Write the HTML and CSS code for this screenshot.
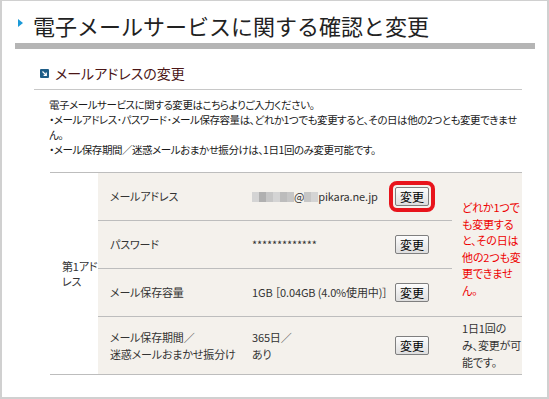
FILE: index.html
```html
<!DOCTYPE html>
<html lang="ja">
<head>
<meta charset="utf-8">
<title>電子メールサービスに関する確認と変更</title>
<link rel="stylesheet" href="styles.css">
</head>
<body>
<div class="frame">
  <div class="page-title">
    <span class="tri"></span>
    <h1>電子メールサービスに関する確認と変更</h1>
  </div>
  <div class="title-bar"></div>
  <section class="section">
    <h2 class="sec-head">
      <svg class="sec-icon" width="9" height="9" viewBox="0 0 9 9"><rect width="9" height="9" rx="1" fill="#1f5e88"/><path d="M2.5 2.5 L6.2 6.2 M6.3 3.6 V6.3 H3.6" stroke="#fff" stroke-width="1.2" fill="none"/></svg>
      <span>メールアドレスの変更</span>
    </h2>
    <div class="intro">
      <p>電子メールサービスに関する変更はこちらよりご入力ください。</p>
      <p>・メールアドレス･パスワード･メール保存容量は、どれか1つでも変更すると、その日は他の2つとも変更できません。</p>
      <p>・メール保存期間／迷惑メールおまかせ振分けは、1日1回のみ変更可能です。</p>
    </div>
    <table class="tbl">
      <tr class="r1">
        <td class="addr" rowspan="4">第1アド<br>レス</td>
        <td class="label">メールアドレス</td>
        <td class="value"><span class="blur"><i class="b1"></i><i class="b2"></i><i class="b3"></i><i class="b1"></i><i class="b4"></i><i class="b3"></i></span>@<span class="blur"><i class="b3"></i><i class="b1"></i></span>pikara.ne.jp</td>
        <td class="btn"><button class="chg hl">変更</button></td>
        <td class="note red" rowspan="3">どれか1つで<br>も変更する<br>と、その日は<br>他の2つも変<br>更できませ<br>ん。</td>
      </tr>
      <tr class="r2">
        <td class="label">パスワード</td>
        <td class="value">*************</td>
        <td class="btn"><button class="chg">変更</button></td>
      </tr>
      <tr class="r3">
        <td class="label">メール保存容量</td>
        <td class="value">1GB ［0.04GB (4.0%使用中)］</td>
        <td class="btn"><button class="chg">変更</button></td>
      </tr>
      <tr class="r4">
        <td class="label">メール保存期間／<br>迷惑メールおまかせ振分け</td>
        <td class="value">365日／<br>あり</td>
        <td class="btn"><button class="chg">変更</button></td>
        <td class="note">1日1回の<br>み、変更が可<br>能です。</td>
      </tr>
    </table>
  </section>
</div>
</body>
</html>
```
FILE: styles.css
```css
* { box-sizing: border-box; }
html, body { margin: 0; padding: 0; background: #fff; }
body {
  font-family: "Noto Sans CJK JP", "Noto Sans", sans-serif;
  font-size: 11px;
  letter-spacing: -0.15px;
  color: #1a1a1a;
  font-feature-settings: "palt";
}
.frame {
  width: 549px;
  height: 399px;
  border: 2px solid #d0d0d0;
  border-top-width: 1px;
  overflow: hidden;
  padding: 0 12px 0 13px;
}
.page-title {
  display: flex;
  align-items: center;
  height: 42px;
  padding-left: 3px;
}
.tri {
  width: 0;
  height: 0;
  border-top: 4px solid transparent;
  border-bottom: 4px solid transparent;
  border-left: 5px solid #1b9ad8;
  margin: 1px 10px 0 0;
}
.page-title h1 {
  margin: 0;
  font-size: 22px;
  font-weight: 400;
  letter-spacing: 0;
  color: #222;
  font-feature-settings: normal;
  line-height: 1;
  padding-top: 5px;
}
.title-bar {
  height: 6px;
  background: #b5b5b5;
}
.section {
  padding: 0 13px 0 19px;
}
.sec-head {
  margin: 12px 0 0;
  display: flex;
  align-items: center;
  gap: 6px;
  height: 24px;
  padding-left: 6px;
  border-bottom: 1px solid #c8c8c8;
  padding-bottom: 4px;
  box-sizing: content-box;
  font-size: 14px;
  letter-spacing: 0;
  font-weight: 400;
  color: #4b1616;
}
.sec-icon { flex: none; }
.intro {
  padding: 7px 0 0 15px;
  font-size: 10.5px;
  letter-spacing: -0.45px;
}
.intro p {
  margin: 0;
  line-height: 15px;
}
.tbl {
  margin: 15px 0 0 16px;
  width: 472px;
  table-layout: fixed;
  border-collapse: collapse;
  border-top: 1px solid #bdbdbd;
  border-bottom: 1px solid #bdbdbd;
  color: #333;
}
.tbl td {
  padding: 0;
  vertical-align: middle;
  background: #f4f1ec;
  line-height: 17px;
  white-space: nowrap;
}
.tbl td.addr {
  background: #fff;
  width: 48px;
  padding: 0 0 0 12px;
  line-height: 15px;
}
.tbl td.label { width: 142px; padding-left: 12px; }
.tbl td.value { width: 143px; padding-left: 12px; }
.tbl td.btn { width: 69px; padding-left: 12px; }
.tbl td.note { width: 70px; padding-left: 10px; }
.tbl td.note.red { line-height: 16.5px; padding-top: 8px; }
.r1 td, .r2 td, .r3 td { height: 48px; }
.r4 td { height: 58px; }
.r2 td, .r3 td, .r4 td { border-top: 1px solid #bdbdbd; }
.red { color: #ee0000; }
.blur { display: inline-flex; vertical-align: middle; margin-top: -2px; }
.blur i { display: block; width: 7px; height: 10px; }
.blur .b1 { background: #d4d4d4; }
.blur .b2 { background: #b0b0b0; }
.blur .b3 { background: #c6c6c6; }
.blur .b4 { background: #bcbcbc; }
.chg {
  font-family: inherit;
  font-size: 12px;
  letter-spacing: 0;
  width: 34px;
  height: 19px;
  padding: 0;
  line-height: 17px;
  color: #000;
  background: linear-gradient(#fdfdfd, #dedede);
  border: 1px solid #7f7f7f;
  border-radius: 2px;
}
.chg.hl {
  outline: 4px solid #e8141c;
  outline-offset: 2px;
}
```
